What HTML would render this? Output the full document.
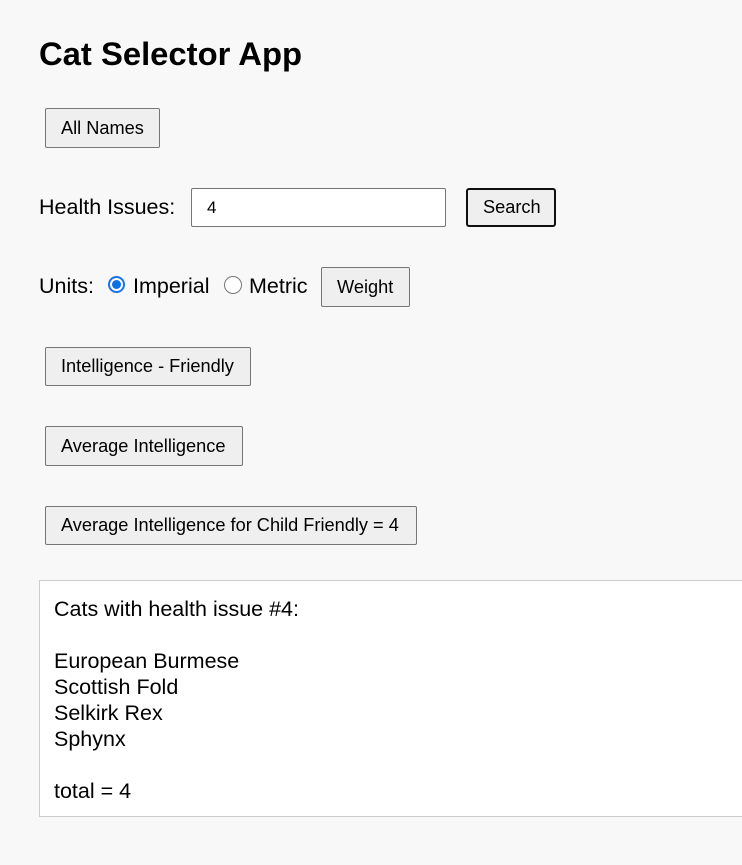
<!DOCTYPE html>
<html><head><style>
body{margin:0;background:#f8f8f8;font-family:"Liberation Sans",Arial,sans-serif;color:#000;width:742px;height:865px;overflow:hidden;position:relative}
.a{position:absolute}
.btn{position:absolute;background:#efefef;border:1px solid #767676;border-radius:2px;font-size:18.2px;box-sizing:border-box;display:flex;align-items:center;justify-content:flex-start;padding-left:15px;white-space:nowrap}
.t{font-size:21.5px;white-space:nowrap}
</style></head><body>
<div class="a" style="left:39px;top:35px;font-size:32.8px;font-weight:bold">Cat Selector App</div>
<div class="btn" style="left:45px;top:108px;width:115px;height:40px">All Names</div>
<div class="a t" style="left:39px;top:195px">Health Issues:</div>
<div class="a" style="left:191px;top:188px;width:255px;height:39px;box-sizing:border-box;border:1px solid #767676;border-radius:2px;background:#fff;font-size:17px;padding:9px 0 0 15px">4</div>
<div class="btn" style="left:466px;top:188px;width:90px;height:39px;border:2px solid #101010;border-radius:3px">Search</div>
<div class="a t" style="left:39px;top:274px">Units:</div>
<div class="a" style="left:108px;top:276px;width:17px;height:17px;border:2px solid #1a73e8;border-radius:50%;box-sizing:border-box;background:#fff"><div style="width:9px;height:9px;margin:2px;border-radius:50%;background:#0b6fe8"></div></div>
<div class="a t" style="left:133px;top:274px">Imperial</div>
<div class="a" style="left:224px;top:276px;width:18px;height:18px;border:1px solid #767676;border-radius:50%;box-sizing:border-box;background:#fff"></div>
<div class="a t" style="left:249px;top:274px">Metric</div>
<div class="btn" style="left:321px;top:267px;width:89px;height:40px">Weight</div>
<div class="btn" style="left:45px;top:347px;width:206px;height:39px">Intelligence - Friendly</div>
<div class="btn" style="left:45px;top:426px;width:198px;height:40px">Average Intelligence</div>
<div class="btn" style="left:45px;top:506px;width:372px;height:39px">Average Intelligence for Child Friendly = 4</div>
<div class="a" style="left:39px;top:580px;width:710px;height:237px;box-sizing:border-box;border:1px solid #ccc;background:#fff;font-size:21.5px;line-height:26px;padding:15px 0 0 14px">Cats with health issue #4:<br><br>European Burmese<br>Scottish Fold<br>Selkirk Rex<br>Sphynx<br><br>total = 4</div>
</body></html>
